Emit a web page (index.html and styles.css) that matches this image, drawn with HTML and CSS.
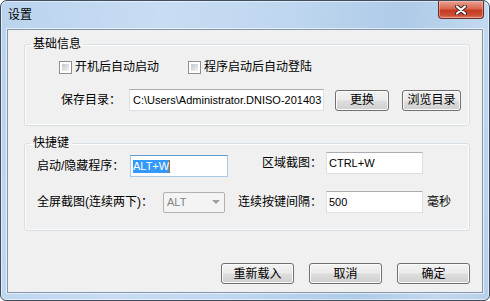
FILE: index.html
```html
<!DOCTYPE html>
<html lang="zh-CN">
<head>
  <meta charset="UTF-8">
  <meta name="viewport" content="width=device-width, initial-scale=1.0">
  <title>设置</title>
  <link rel="stylesheet" href="styles.css">
</head>
<body>
  <div class="window">
    <div class="titlebar">
      <span class="title">设置</span>
      <div class="close-btn">
        <svg width="12" height="10" viewBox="0 0 12 10">
          <path d="M2 1.5 L10 8.5 M10 1.5 L2 8.5" stroke="#3b2424" stroke-width="4" stroke-linecap="round"/>
          <path d="M2 1.5 L10 8.5 M10 1.5 L2 8.5" stroke="#ffffff" stroke-width="2.2" stroke-linecap="round"/>
        </svg>
      </div>
    </div>

    <div class="client">
      <!-- basic settings -->
      <fieldset class="group basic">
        <legend>基础信息</legend>
        <div class="row checks">
          <label class="check first"><span class="box"></span>开机后自动启动</label>
          <label class="check"><span class="box"></span>程序启动后自动登陆</label>
        </div>
        <div class="row path-row">
          <span class="path-label">保存目录：</span>
          <div class="textbox path">C:\Users\Administrator.DNISO-201403</div>
          <button class="btn change">更换</button>
          <button class="btn browse">浏览目录</button>
        </div>
      </fieldset>

      <!-- hotkeys -->
      <fieldset class="group hotkeys">
        <legend>快捷键</legend>
        <div class="row hk-row1">
          <div class="hk-left">
            <span class="hk-label w93">启动/隐藏程序：</span>
            <div class="textbox focused w98"><span class="sel">ALT+W</span><span class="caret"></span></div>
          </div>
          <span class="hk-label right w98">区域截图：</span>
          <div class="textbox w97">CTRL+W</div>
        </div>
        <div class="row hk-row2">
          <span class="hk-label w126">全屏截图(连续两下)：</span>
          <div class="combo disabled">ALT<span class="arrow"></span></div>
          <span class="hk-label right w101">连续按键间隔：</span>
          <div class="textbox w97">500</div>
          <span class="unit">毫秒</span>
        </div>
      </fieldset>

      <div class="actions">
        <button class="btn wide">重新载入</button>
        <button class="btn wide">取消</button>
        <button class="btn wide">确定</button>
      </div>
    </div>
  </div>
</body>
</html>
```

FILE: styles.css
```css
body {
  margin: 0;
  font-family: "Liberation Sans", "Noto Sans CJK SC", sans-serif;
  font-size: 12px;
  line-height: 16px;
  color: #000;
  background: #fff;
}
.window {
  width: 490px;
  height: 301px;
  box-sizing: border-box;
  border: 1px solid #3f4d5e;
  border-radius: 7px 7px 6px 6px;
  background: linear-gradient(100deg, #bad3ee 0%, #c8ddf3 30%, #bed6ef 55%, #aecbe8 75%, #c2d8ee 90%, #b8d0ea 100%);
  box-shadow: inset 0 0 0 1px rgba(255, 255, 255, 0.55);
  overflow: hidden;
}
.titlebar {
  height: 28px;
  display: flex;
  align-items: flex-start;
  padding-left: 7px;
  padding-right: 5px;
}
.title {
  margin-top: 6px;
  line-height: 16px;
}
.close-btn {
  margin-left: auto;
  width: 46px;
  height: 18px;
  box-sizing: border-box;
  border: 1px solid #6b2d25;
  border-top: none;
  border-radius: 0 0 4px 4px;
  background: linear-gradient(#eaa192 0%, #d8664f 45%, #c43a22 55%, #cc4f34 85%, #e0806a 100%);
  box-shadow: inset 0 0 0 1px rgba(255, 210, 200, 0.45);
  display: flex;
  align-items: center;
  justify-content: center;
}
.close-btn svg {
  display: block;
}
.client {
  margin: 0 6px;
  height: 264px;
  box-sizing: border-box;
  border: 1px solid #8396ad;
  background: #f0f0f0;
  box-shadow: 0 0 0 1px rgba(255, 255, 255, 0.6);
}

/* group boxes */
.group {
  width: 446px;
  box-sizing: border-box;
  margin: 0 0 0 16px;
  padding: 0;
  border: 1px solid #d5dfe5;
  border-radius: 3px;
  box-shadow: inset 0 0 0 1px #fcfcfc;
  min-width: 0;
}
.group legend {
  margin-left: 5px;
  padding: 0 3px;
  line-height: 16px;
}
.basic {
  margin-top: 6px;
  padding-bottom: 14px;
}
.hotkeys {
  margin-top: 9px;
  padding-bottom: 17px;
}
.row {
  display: flex;
  align-items: center;
}

/* checkboxes */
.checks {
  margin-top: 7px;
  height: 16px;
  padding-left: 34px;
}
.check {
  display: flex;
  align-items: center;
  gap: 3px;
}
.check.first {
  width: 129px;
}
.box {
  width: 13px;
  height: 13px;
  box-sizing: border-box;
  border: 1px solid #8e8f8f;
  padding: 2px;
  background: linear-gradient(135deg, #c3c7cd, #f3f3f3) content-box, #fff;
  box-shadow: inset 0 0 0 2px #fff;
}

/* path row */
.path-row {
  margin-top: 14px;
  height: 22px;
  padding-left: 36px;
}
.path-label {
  width: 68px;
}
.textbox {
  height: 22px;
  box-sizing: border-box;
  border: 1px solid #dbe1e8;
  border-top-color: #abadb3;
  background: #fff;
  padding: 0 2px;
  font-size: 11px;
  line-height: 20px;
  white-space: nowrap;
  overflow: hidden;
}
.path {
  width: 195px;
  padding-left: 3px;
}
.btn {
  height: 21px;
  box-sizing: border-box;
  border: 1px solid #707070;
  border-radius: 3px;
  background: linear-gradient(#f2f2f2 0%, #ebebeb 48%, #dddddd 52%, #cfcfcf 100%);
  box-shadow: inset 0 0 0 1px #fbfbfb;
  font: inherit;
  color: #000;
  padding: 0;
}
.change {
  width: 54px;
  margin-left: 11px;
}
.browse {
  width: 59px;
  margin-left: 13px;
}

/* hotkeys */
.hk-row1 {
  margin-top: 1px;
  height: 25px;
  padding-left: 12px;
  align-items: flex-start;
}
.hk-left {
  display: flex;
  align-items: center;
  margin-top: 3px;
}
.hk-row1 > .hk-label {
  line-height: 22px;
}
.hk-row2 {
  margin-top: 14px;
  height: 22px;
  padding-left: 12px;
}
.hk-label.right {
  text-align: right;
  padding-right: 4px;
  box-sizing: border-box;
}
.w93 { width: 93px; }
.w97 { width: 97px; }
.w98 { width: 98px; }
.w101 { width: 101px; }
.w126 { width: 126px; }
.textbox.focused {
  border-color: #a9c9e6;
  border-top-color: #5b9bd0;
  padding-left: 2px;
  display: flex;
  align-items: center;
}
.sel {
  background: #3399ff;
  color: #fff;
  line-height: 13px;
}
.caret {
  width: 1px;
  height: 13px;
  background: #c6650c;
}
.combo {
  width: 62px;
  height: 21px;
  box-sizing: border-box;
  border: 1px solid #b2b2b2;
  border-radius: 2px;
  background: #f4f4f4;
  color: #838383;
  padding-left: 3px;
  font-size: 11px;
  line-height: 19px;
  display: flex;
  align-items: center;
}
.arrow {
  margin-left: auto;
  margin-right: 4px;
  width: 0;
  height: 0;
  border-left: 4px solid transparent;
  border-right: 4px solid transparent;
  border-top: 4px solid #a0a0a0;
}
.unit {
  margin-left: 4px;
}

/* bottom buttons */
.actions {
  display: flex;
  justify-content: flex-end;
  gap: 15px;
  margin-top: 32px;
  padding-right: 12px;
}
.btn.wide {
  width: 73px;
}
```
